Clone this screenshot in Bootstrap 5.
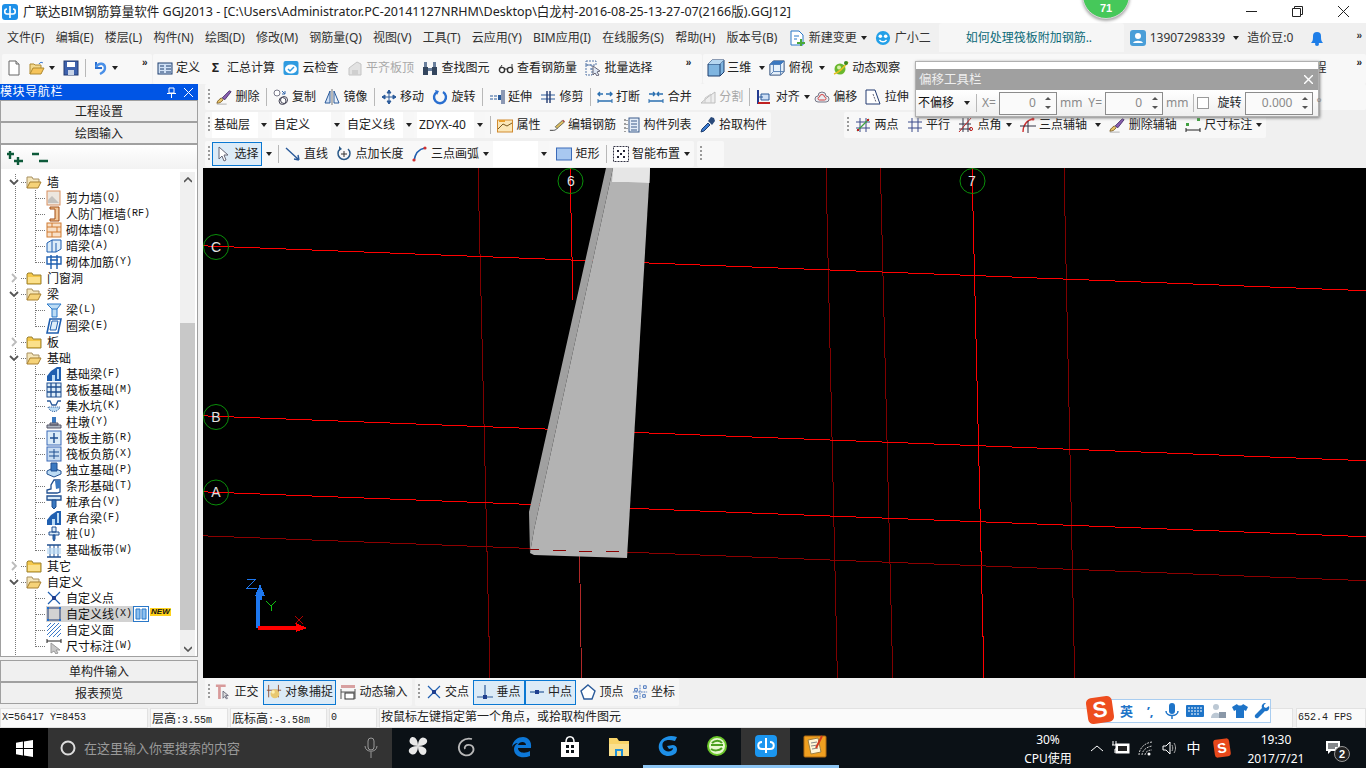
<!DOCTYPE html>
<html lang="zh">
<head>
<meta charset="UTF-8" />
<title>广联达BIM钢筋算量软件 GGJ2013</title>
<link rel="stylesheet" href="https://cdn.jsdelivr.net/npm/bootstrap@5.3.2/dist/css/bootstrap.min.css" />
<style>
  html, body { height: 768px; overflow: hidden; }
  body { width: 1366px; background: #f0f0f0; color: #222; font: 12px/16px "Noto Sans", "Noto Sans CJK SC", sans-serif; position: relative; }
  svg.ic { width: 16px; height: 16px; flex: none; display: block; }
  svg.ic.w18 { width: 18px; height: 18px; }
  /* title + menu */
  .ttl { height: 23px; background: #fff; padding-left: 2px; font-size: 12.53px; white-space: nowrap; }
  .ttl svg.ic { margin-right: 5px; }
  .wbtn { width: 46px; height: 23px; }
  .mnu { height: 31px; padding: 0 0 2px 7px; white-space: nowrap; color: #333; }
  .mnu > span.mi { margin-right: 11.2px; }
  .hot { width: 185px; height: 29px; background: #f6f6f6; color: #0b6a78; padding-left: 27px; border-radius: 3px 3px 0 0; margin-left: 8px; margin-right: 6px; }
  .dbl { font: bold 10px/10px "Liberation Sans", sans-serif; }
  .dbl2 { padding: 4px 11px 0 29px; }
  /* toolbars */
  .rowb { white-space: nowrap; }
  .r1 { height: 30px; padding-left: 2px; }
  .r2 { height: 26px; padding-left: 2px; }
  .r3 { height: 29px; padding-left: 2px; }
  .r4 { height: 29px; padding: 2px 0 0 2px; }
  .seg { height: 100%; background: #f8f8f8; border-radius: 2px; display: flex; align-items: center; }
  .r1 .seg { padding-bottom: 2px; }
  .r2 .seg, .r3 .seg, .r4 .seg { height: 26px; }
  .gap1 { margin-left: 1px; }
  .gap3 { margin-left: 3px; }
  .gap73 { margin-left: 73px; }
  .t { display: flex; align-items: center; padding: 0 4px; height: 100%; }
  .t svg.ic { margin-right: 3.5px; }
  .t svg.ic.w18 { margin-right: 2px; }
  .t.off { color: #a9a9a9; }
  .t.on { background: #dcebf7; border: 1px solid #0a78d2; height: 24px; padding: 0 2px; }
  .t.on.pz { padding: 0 3px; }
  .t.tight { padding-right: 0; }
  .sep { width: 1px; height: 18px; background: #b8b8b8; margin: 0 2px; flex: none; }
  .grip { width: 2px; height: 16px; margin: 0 2px 0 3px; flex: none; background: repeating-linear-gradient(#9a9a9a 0 2px, transparent 2px 4px); }
  .lb .seg:first-child .grip { margin-right: 1px; }
  .car { width: 0; height: 0; border: 3px solid transparent; border-top: 4px solid #222; border-bottom: 0; flex: none; display: inline-block; }
  .cml2 { margin-left: 2px; }
  .cmb { height: 26px; background: #fff; display: flex; align-items: center; padding-left: 2px; margin-right: 3px; flex: none; }
  .cmb b { font-weight: 400; flex-grow: 1; }
  .cmb i { width: 11px; height: 100%; background: #f7f7f7; display: flex; align-items: center; justify-content: center; }
  .c57 { width: 57px; } .c70 { width: 70px; } .c69 { width: 69px; } .c68 { width: 68px; } .c56 { width: 56px; }
  .w4 { width: 4px; flex: none; } .w7 { width: 7px; flex: none; } .w10 { width: 10px; flex: none; }
  .me19 { margin-right: 14px; }
  /* left panel */
  .mainw { height: 624px; }
  .side { width: 203px; padding-right: 5px; flex: none; }
  .phd { height: 16px; background: #0055e5; color: #fff; letter-spacing: .6px; padding-right: 5px; }
  .navb { --bs-btn-padding-y: 0; --bs-btn-font-size: 12px; --bs-btn-line-height: 1; --bs-btn-border-radius: 0; background: #f0f0f0; border: 1px solid #a0a0a0; color: #222; display: block; width: 100%; height: 22px; padding-top: 2px; }
  .treetb { height: 25px; padding: 6px 0 0 6px; background: linear-gradient(#fff, #f2f2f2); border: 1px solid #a0a0a0; border-bottom: 0; }
  .treew { height: 488px; border: 1px solid #a0a0a0; border-top: 0; background: #fff; overflow: hidden; margin-bottom: 3px; }
  .tree { flex-grow: 1; padding-top: 5px; overflow: hidden; font-family: "Noto Sans CJK SC", sans-serif; color: #111; }
  .tr { height: 16px; display: flex; align-items: center; white-space: nowrap; background-repeat: no-repeat; --dv: repeating-linear-gradient(#777 0 1px, transparent 1px 2px); --dh: repeating-linear-gradient(90deg, #777 0 1px, transparent 1px 2px); }
  .tr0 { background-image: var(--dv), var(--dh); background-size: 1px 100%, 5px 1px; background-position: 14px 0, 20px 8px; }
  .tr0.end { background-size: 1px 8px, 5px 1px; }
  .tr1 { padding-left: 45px; background-image: var(--dv), var(--dv), var(--dh); background-size: 1px 100%, 1px 100%, 10px 1px; background-position: 14px 0, 34px 0, 35px 8px; }
  .tr1.lst { background-size: 1px 100%, 1px 9px, 10px 1px; }
  .exp { width: 12px; margin-left: 8px; flex: none; background: #fff; }
  .exp svg, .fold svg { display: block; }
  .fold { margin: 0 5px; flex: none; }
  .tr1 svg.ic { margin-right: 4px; }
  .mn { font: 400 10px/16px "Liberation Mono", monospace; }
  .tsel { display: flex; align-items: center; background: #d2d2d2; padding-right: 1px; height: 16px; }
  .neww { font: italic 700 8px/8px "Liberation Sans", sans-serif; background: #ffd21c; color: #111; padding: 0 1px; margin-top: -5px; margin-left: 1px; }
  .scb { width: 15px; margin: 3px 2px 0 0; background: #f0f0f0; flex: none; }
  .sar { height: 16px; }
  .sp135 { height: 135px; } .sth { height: 307px; background: #c8c8c8; } .sp11 { height: 11px; }
  /* canvas */
  .work { width: 1163px; }
  .cnv { display: block; background: #000; width: 1163px; height: 510px; }
  .cnv text { font: 14px "Liberation Sans", sans-serif; fill: #e0e0e0; text-anchor: middle; }
  .lb { height: 28px; padding-left: 2px; }
  .lb .seg { height: 28px; background: #f6f6f6; }
  .lb .t.on { height: 25px; }
  /* status */
  .stat { height: 20px; gap: 2px; }
  .cell { background: #fafafa; border: 1px solid #e2e2e2; height: 20px; padding-left: 1px; font-size: 12px; white-space: nowrap; }
  .cm { font: 10px/18px "Liberation Mono", monospace; }
  .cm u { text-decoration: none; font: 12px/18px "Noto Sans CJK SC", sans-serif; }
  .s148 { width: 148px; } .s78 { width: 78px; } .s97 { width: 97px; } .s48 { width: 48px; } .s914 { width: 914px; } .s70 { width: 70px; }
  /* taskbar */
  .task { height: 40px; background: #0b1116; color: #fff; }
  .tst { width: 48px; background: #000; height: 40px; }
  .tse { width: 344px; height: 40px; background: #333; color: #9a9a9a; padding-left: 12px; font-size: 13px; }
  .tse svg.ring { margin-right: 8px; }
  .tse .ms-auto { margin-right: 13px; }
  .tk { width: 49px; height: 40px; flex: none; padding-bottom: 2px; }
  svg.big { width: 24px; height: 24px; display: block; flex: none; }
  .tk.und { border-bottom: 3px solid #8cc4f2; }
  .tk.act { background: #333; border-bottom: 3px solid #8cc4f2; }
  .tm4 { margin-left: 1px; } .tm5 { margin-left: 5px; }
  .tray { margin-left: auto; width: 348px; height: 40px; }
  .tc { display: flex; align-items: center; justify-content: center; flex: none; height: 40px; }
  .t60 { width: 60px; flex-direction: column; line-height: 19px; padding-top: 2px; }
  .t8 { width: 8px; } .t22 { width: 22px; } .t24 { width: 24px; } .t26 { width: 26px; } .t23 { width: 23px; } .t25 { width: 25px; font-size: 14px; } .t32 { width: 32px; } .t76 { width: 76px; flex-direction: column; line-height: 19px; padding-top: 2px; } .t52 { width: 52px; position: relative; padding-right: 14px; }
  .nbad { position: absolute; left: 20px; top: 18px; width: 16px; height: 16px; border-radius: 50%; background: #222; border: 1px solid #999; text-align: center; font: bold 11px/14px "Liberation Sans", sans-serif; }
  /* things lying over the rest */
  .gball { position: absolute; left: 1082px; top: -29px; width: 48px; height: 48px; border-radius: 50%; background: #46c85a; border: 1px solid #d8d8d8; box-shadow: 0 2px 3px #aaa; z-index: 5; color: #fff; font: bold 11px/14px "Liberation Sans", sans-serif; text-align: center; padding-top: 29px; }
  .flt { position: absolute; left: 915px; top: 61px; width: 404px; height: 56px; background: #fff; border: 1px solid #b0b0b0; box-shadow: 1px 1px 3px #777; z-index: 4; }
  .fhd { margin-top: 7px; height: 21px; background: #a0a0a0; color: #eee; padding: 0 5px 0 3px; font-size: 12.5px; }
  .fbd { height: 26px; background: linear-gradient(#fff, #efefef); white-space: nowrap; color: #8a8a8a; }
  .fbd .cmb { height: 24px; background: transparent; color: #111; width: 56px; margin-right: 2px; padding-left: 2px; }
  .fbd .cmb i { background: transparent; }
  .spn { width: 58px; height: 23px; border: 1px solid #8c8c8c; background: #fafafa; flex: none; display: flex; align-items: center; justify-content: flex-end; }
  .spr { width: 68px; }
  .spk { width: 15px; margin-left: 5px; height: 100%; display: flex; flex-direction: column; align-items: center; justify-content: space-around; padding: 2px 0; }
  .au { width: 0; height: 0; border: 3px solid transparent; border-bottom: 3px solid #555; border-top: 0; }
  .ad { width: 0; height: 0; border: 3px solid transparent; border-top: 3px solid #555; border-bottom: 0; }
  .fm { margin: 0 3px; }
  .fbd .form-check-input { width: 12px; height: 12px; border-radius: 0; border: 1px solid #9a9a9a; margin: 0 8px 0 1px; flex: none; }
  .sog { position: absolute; left: 1100px; top: 699px; width: 171px; height: 24px; background: #fff; border: 1px solid #a9cdf0; z-index: 6; padding-left: 19px; color: #1e74c8; gap: 6px; font-weight: 700; font-size: 13px; }
  .sgl { position: absolute; left: 1087px; top: 697px; width: 26px; height: 26px; background: #ee4d1e; border-radius: 5px; transform: rotate(-8deg); color: #fff; font: bold 22px/25px "Liberation Sans", sans-serif; text-align: center; z-index: 7; }
  .sgs { width: 16px; height: 18px; background: #e8481a; border-radius: 3px; color: #fff; font: bold 14px/18px "Liberation Sans", sans-serif; text-align: center; transform: rotate(-8deg); }
</style>
</head>
<body>

<svg width="0" height="0" class="d-block">
  <defs>
  <symbol id="logo" viewBox="0 0 16 16"><rect width="16" height="16" rx="3" fill="#1e90e8"/><path d="M8 2v12M5 5c-3 0-3 5 0 5h6c3 0 3-5 0-5" fill="none" stroke="#fff" stroke-width="1.6"/></symbol>
  <symbol id="new" viewBox="0 0 16 16"><path d="M3 1h7l3 3v11H3z" fill="#fff" stroke="#666"/><path d="M10 1v3h3" fill="#ddd" stroke="#666"/></symbol>
  <symbol id="open" viewBox="0 0 16 16"><path d="M1 14V4h4l1 1h6v3" fill="#f3d98e" stroke="#b08a30"/><path d="M1 14l3-6h11l-3 6z" fill="#f6c45a" stroke="#b08a30"/><path d="M10 4c1-2 3-2 4-1" fill="none" stroke="#3a7ad0"/></symbol>
  <symbol id="save" viewBox="0 0 16 16"><rect x="1" y="1" width="14" height="14" fill="#3e62ad" stroke="#223a70"/><rect x="4" y="2" width="8" height="5" fill="#fff"/><rect x="5" y="10" width="6" height="5" fill="#c8d4e8"/></symbol>
  <symbol id="undo" viewBox="0 0 16 16"><path d="M4 2v6h6" fill="none" stroke="#2a6fd0" stroke-width="2"/><path d="M4 7c3-5 9-4 9 1 0 3-3 5-5 6" fill="none" stroke="#4a90e8" stroke-width="2.4"/></symbol>
  <symbol id="def" viewBox="0 0 16 16"><rect x="1" y="3" width="14" height="11" fill="#cfe0f5" stroke="#1f3f6f"/><path d="M3 6h4M3 9h4M3 12h4M9 6h5M9 9h5M9 12h5" stroke="#1f3f6f"/></symbol>
  <symbol id="cloud" viewBox="0 0 16 16"><rect x=".5" y="1" width="15" height="14" rx="2" fill="#2f9be0"/><ellipse cx="8" cy="9" rx="6" ry="4.5" fill="#fff"/><path d="M5 9l2 2 4-4" stroke="#2f9be0" fill="none" stroke-width="1.5"/></symbol>
  <symbol id="flat" viewBox="0 0 16 16"><path d="M2 15V8l8-6 4 2v11z" fill="#e2e2e2" stroke="#c4c4c4"/><path d="M5 15v-5h6v5" fill="#cfcfcf"/></symbol>
  <symbol id="binoc" viewBox="0 0 16 16"><path d="M1 7h5v8H1zM10 7h5v8h-5z" fill="#34465e"/><path d="M6 8h4v3H6zM2 2h3v5H2zM11 2h3v5h-3z" fill="#6a7f9c"/></symbol>
  <symbol id="glass" viewBox="0 0 16 16"><circle cx="4" cy="10" r="2.6" fill="#fff" stroke="#333" stroke-width="1.4"/><circle cx="12" cy="10" r="2.6" fill="#fff" stroke="#333" stroke-width="1.4"/><path d="M6 9h4M2 8l2-3M14 8V4" stroke="#333"/></symbol>
  <symbol id="batch" viewBox="0 0 16 16"><path d="M1 1h10v4H1zM1 5h6v10H1zM5 9h6" fill="none" stroke="#5577a8" stroke-dasharray="2 1"/><path d="M8 6l7 5-3 1 2 3-2 1-2-3-2 2z" fill="#dfe8f5" stroke="#667"/></symbol>
  <symbol id="cube" viewBox="0 0 18 18"><path d="M1 5l4-4h12v12l-4 4H1z" fill="#7fb5e0" stroke="#1f3f6f"/><path d="M1 5h12v12M13 5l4-4" fill="none" stroke="#1f3f6f"/><path d="M1 5l4-4h12l-4 4z" fill="#b5d6f0"/></symbol>
  <symbol id="wire" viewBox="0 0 18 18"><path d="M1 5l4-4h12v12l-4 4H1z" fill="#e8f2fb" stroke="#1f3f6f"/><path d="M1 5h12v12M13 5l4-4M1 17l4-4h12M5 1v12" fill="none" stroke="#4a78b0"/><path d="M1 5l4-4h12l-4 4z" fill="#3a78c0"/></symbol>
  <symbol id="orbit" viewBox="0 0 16 16"><circle cx="7" cy="9" r="5.5" fill="#6ab82e"/><circle cx="6" cy="7.5" r="2" fill="#d6f0a8"/><path d="M1 14C7 12 12 6 15 2" stroke="#e8c020" stroke-width="1.6" fill="none"/><circle cx="13" cy="3" r="2" fill="#3a8a20"/></symbol>
  <symbol id="brush" viewBox="0 0 18 18"><path d="M1 16c3 0 5-1 7-4l-2-2c-2 2-4 2-5 6z" fill="#e8c46a" stroke="#7a5a20"/><path d="M7 10l8-8 2 1-7 9z" fill="#8a5fb0" stroke="#45306a"/><path d="M1 17h11" stroke="#aaa"/></symbol>
  <symbol id="copy" viewBox="0 0 16 16"><circle cx="4" cy="4" r="3" fill="#fff" stroke="#778"/><circle cx="11" cy="11" r="3.5" fill="#fff" stroke="#445"/><circle cx="9.5" cy="12" r="3.5" fill="none" stroke="#445"/><path d="M9 2l3 3M12 2v3H9" fill="none" stroke="#3366aa"/></symbol>
  <symbol id="mirror" viewBox="0 0 16 16"><path d="M1 14L6 2v12z" fill="#cfe0f5" stroke="#2a5a9a"/><path d="M15 14L10 2v12z" fill="#eef4fb" stroke="#2a5a9a"/><path d="M8 0v16" stroke="#777"/></symbol>
  <symbol id="move" viewBox="0 0 16 16"><path d="M8 1v14M1 8h14M8 1L6 4h4zM8 15l-2-3h4zM1 8l3-2v4zM15 8l-3-2v4z" fill="#2a5a9a" stroke="#2a5a9a"/></symbol>
  <symbol id="rot" viewBox="0 0 16 16"><path d="M11 3a6 6 0 1 1-6 0" fill="none" stroke="#2a6fd0" stroke-width="2.4"/><path d="M3 1l4 1-2 4z" fill="#2a6fd0"/></symbol>
  <symbol id="ext" viewBox="0 0 16 16"><path d="M13 1v14M15 1v14" stroke="#223a70"/><path d="M1 7h8M1 10h8" stroke="#2a5a9a" stroke-dasharray="3 1"/><path d="M9 6h3v5H9z" fill="#2a5a9a"/></symbol>
  <symbol id="trim" viewBox="0 0 16 16"><path d="M1 6h14M1 10h14" stroke="#2a5a9a"/><path d="M7 2v12M10 2v12" stroke="#223a70" stroke-width="1.4"/></symbol>
  <symbol id="brk" viewBox="0 0 16 16"><path d="M1 5h5M9 5h6M1 12h14M3 3L1 5l2 2M13 3l2 2-2 2" fill="none" stroke="#2a6fb0" stroke-width="1.4"/><path d="M1 10v4M15 10v4" stroke="#2a6fb0"/></symbol>
  <symbol id="mrg" viewBox="0 0 16 16"><path d="M1 5h5M9 5h6M1 12h14M5 3l2 2-2 2M11 3L9 5l2 2" fill="none" stroke="#2a6fb0" stroke-width="1.4"/><path d="M1 10v4M15 10v4" stroke="#2a6fb0"/></symbol>
  <symbol id="spl" viewBox="0 0 16 16"><path d="M1 14L8 8l7-5v11z" fill="#eee" stroke="#bdbdbd"/><path d="M5 14V9l6-4v9" fill="none" stroke="#c8c8c8"/></symbol>
  <symbol id="alig" viewBox="0 0 16 16"><path d="M2 1v14" stroke="#223a90" stroke-width="2"/><path d="M2 14h12" stroke="#c02020" stroke-width="2"/><path d="M5 5h8v6H5z" fill="#cfe0f5" stroke="#2a5a9a"/><path d="M3 8h4" stroke="#2a5a9a"/></symbol>
  <symbol id="ofs" viewBox="0 0 16 16"><path d="M4 13a3 3 0 0 1 0-6 4 4 0 0 1 8 0 3 3 0 0 1 0 6z" fill="#e9edf2" stroke="#778"/><path d="M5.500 11a1.500 1.500 0 0 1 0-3 2.500 2.500 0 0 1 5 0 1.500 1.500 0 0 1 0 3z" fill="none" stroke="#d24040"/></symbol>
  <symbol id="strch" viewBox="0 0 16 16"><path d="M1 15V1h9l5 14z" fill="#fff" stroke="#223a70"/><path d="M8 5l3 8" stroke="#667" stroke-dasharray="2 1"/></symbol>
  <symbol id="prop" viewBox="0 0 16 16"><rect x=".5" y="3" width="15" height="12" fill="#fbe7b8" stroke="#d08a30"/><path d="M1 12l5-5 4 2 5-3" stroke="#7a5a20" fill="none"/><path d="M2 3h6v2H2z" fill="#e8a030"/></symbol>
  <symbol id="pen" viewBox="0 0 18 16"><path d="M1 14h4c2 0 3-1 5-3" fill="none" stroke="#333"/><path d="M7 10l8-7 2 2-8 7z" fill="#e0c060" stroke="#665"/><path d="M15 3l2 2 1-1-2-2z" fill="#b04040"/></symbol>
  <symbol id="lst" viewBox="0 0 16 16"><rect x="5" y="1" width="10" height="14" fill="#e4edf8" stroke="#3a5a8a"/><path d="M7 4h6M7 7h6M7 10h6M7 13h6" stroke="#3a5a8a"/><path d="M1 2v2M1 6v2M1 10v2M1 14v1M3 3v1M3 7v1M3 11v1" stroke="#444"/></symbol>
  <symbol id="pick" viewBox="0 0 16 16"><path d="M1 15l1-3 6-6 2 2-6 6z" fill="#3a7ad0" stroke="#1f3f6f"/><path d="M8 4l4 4 3-4-1-3-3-1z" fill="#2a4a7a"/></symbol>
  <symbol id="two" viewBox="0 0 16 16"><path d="M1 5h14M1 11h14M5 1v14M11 1v14" stroke="#3a4a8a"/><path d="M2 14L14 2" stroke="#40a040" stroke-width="1.2"/><path d="M2 12h2v2H2zM12 2h2v2h-2z" fill="#c02020"/></symbol>
  <symbol id="par" viewBox="0 0 16 16"><path d="M1 5h14M1 11h14M5 1v14M11 1v14" stroke="#3a4a8a"/></symbol>
  <symbol id="ang" viewBox="0 0 16 16"><path d="M1 7h12M1 12h12M5 1v14M10 1v14" stroke="#334"/><path d="M1 15L13 1" stroke="#c02020"/><circle cx="13" cy="12" r="1.6" fill="none" stroke="#c02020"/></symbol>
  <symbol id="arc" viewBox="0 0 16 16"><path d="M3 15C3 8 7 3 13 2" fill="none" stroke="#d03030" stroke-width="1.4"/><path d="M0 9h16M8 4v12" stroke="#334"/><circle cx="13" cy="2" r="1.500" fill="#d03030"/></symbol>
  <symbol id="dim" viewBox="0 0 16 16"><path d="M1 11v4M15 11v4M1 13h14" stroke="#222"/><path d="M1 6h3v3H1zM12 1h3v3h-3z" fill="#40a040"/></symbol>
  <symbol id="cur" viewBox="0 0 16 16"><path d="M4 1v12l3-3 2 5 2-1-2-5h4z" fill="#fff" stroke="#667"/></symbol>
  <symbol id="lin" viewBox="0 0 16 16"><path d="M1 2l13 12M14 14l-5-1M14 14l-1-5" fill="none" stroke="#2a5a9a" stroke-width="1.4"/></symbol>
  <symbol id="plen" viewBox="0 0 16 16"><path d="M12 3a6 6 0 1 1-8 0" fill="none" stroke="#2a5a8a" stroke-width="1.500"/><path d="M3 0l3 3-3 2z" fill="#2a5a8a"/><path d="M8 5v6M5 8h6" stroke="#333"/></symbol>
  <symbol id="arc2" viewBox="0 0 16 16"><path d="M2 15C3 8 7 3 13 2" fill="none" stroke="#1f5fb0" stroke-width="1.6"/><circle cx="13" cy="2" r="1.600" fill="#d03030"/><circle cx="2" cy="14" r="1.600" fill="#d03030"/></symbol>
  <symbol id="rct" viewBox="0 0 16 16"><rect x=".5" y="2" width="15" height="12" fill="#a8c8f0" stroke="#3a6ab8"/></symbol>
  <symbol id="smt" viewBox="0 0 16 16"><rect x=".5" y=".5" width="15" height="15" fill="#fff" stroke="#334" stroke-dasharray="2 1"/><path d="M4 4h2v2H4zM10 4h2v2h-2zM7 7h2v2H7zM4 10h2v2H4zM10 10h2v2h-2z" fill="#223"/></symbol>
  <symbol id="orth" viewBox="0 0 18 18"><path d="M1 2h11M5 2v15" stroke="#d89a9a" stroke-width="3"/><path d="M9 8v8l2-2 2 3 1-1-2-3h3z" fill="#ddd" stroke="#667"/></symbol>
  <symbol id="snap" viewBox="0 0 18 18"><path d="M3 1v14M14 1v14M1 7h16" stroke="#8a4a30"/><circle cx="10" cy="11" r="5" fill="#e8c870"/><circle cx="8" cy="9" r="2" fill="#fff0b0"/></symbol>
  <symbol id="dyn" viewBox="0 0 16 16"><path d="M1 1h14v3H1z" fill="#d8a0a0"/><path d="M1 5v10M15 5v10M1 8h14" stroke="#555"/><rect x="5" y="9" width="9" height="6" fill="#fff" stroke="#333"/></symbol>
  <symbol id="x" viewBox="0 0 16 16"><path d="M2 2l12 12M14 2L2 14" stroke="#1f5fb0" stroke-width="1.2"/><rect x="6" y="6" width="4" height="4" fill="#1f3f8f"/></symbol>
  <symbol id="perp" viewBox="0 0 16 16"><path d="M8 1v12M0 13h16" stroke="#2a5a9a" stroke-width="1.2"/><rect x="6" y="11" width="4" height="4" fill="#1f3f8f"/></symbol>
  <symbol id="midp" viewBox="0 0 16 16"><path d="M1 8h14" stroke="#2a5a9a" stroke-width="1.2"/><rect x="6" y="6" width="4" height="4" fill="#1f3f8f"/></symbol>
  <symbol id="vert" viewBox="0 0 16 16"><path d="M8 1l7 6-3 8H4L1 7z" fill="#fff" stroke="#2a5a9a" stroke-width="1.4"/></symbol>
  <symbol id="crd" viewBox="0 0 18 18"><path d="M9 1v16M1 9h16" stroke="#3a6ab8" stroke-dasharray="2 1"/><path d="M3 5h3v3H3zM13 2h3v3h-3zM3 13h3v3H3zM12 12h3v3h-3z" fill="none" stroke="#3a6ab8"/></symbol>
  <symbol id="chg" viewBox="0 0 16 16"><path d="M2 1h8l4 4v10H2z" fill="#fff" stroke="#2a78c8"/><path d="M5 6h5M5 9h3" stroke="#2a78c8"/><path d="M8 12h3V9h2v3h3v2h-3v2h-2v-2H8z" fill="#4aa83a"/></symbol>
  <symbol id="xiao" viewBox="0 0 18 18"><circle cx="9" cy="9" r="8" fill="#23a0e8"/><circle cx="6" cy="7" r="2" fill="#fff"/><circle cx="12" cy="7" r="2" fill="#fff"/><path d="M5 11c2 3 6 3 8 0" stroke="#fff" fill="none" stroke-width="1.500"/></symbol>
  <symbol id="user" viewBox="0 0 16 16"><rect width="16" height="16" rx="3" fill="#4a9ed8"/><circle cx="8" cy="6" r="3" fill="#fff"/><path d="M3 13c1-3 9-3 10 0z" fill="#fff"/></symbol>
  <symbol id="bell" viewBox="0 0 16 16"><path d="M2 13c2-2 2-4 2-7a4 4 0 0 1 8 0c0 3 0 5 2 7z" fill="#1e7ee8"/><circle cx="8" cy="14" r="2" fill="#1e7ee8"/></symbol>
  <symbol id="fo" viewBox="0 0 16 14"><path d="M1 13V2h5l1 2h6v3" fill="#f5e6ba" stroke="#a89060"/><path d="M1 13l3-6h11l-3 6z" fill="#f5d278" stroke="#a88030"/></symbol>
  <symbol id="fc" viewBox="0 0 16 14"><path d="M1 13V3l1-1h4l1 2h8v9z" fill="#f5c84a" stroke="#9a8030"/><path d="M2 6h12v6H2z" fill="#fbe08a"/></symbol>
  <symbol id="t-wall" viewBox="0 0 16 16"><rect x="1" y="1" width="13" height="14" fill="#ece6df" stroke="#d89060"/><path d="M2 10l4-4 7 7H2z" fill="#a8a8a8" opacity=".6"/></symbol>
  <symbol id="t-door" viewBox="0 0 16 16"><path d="M4 1h9v14H4v-2h5V3H4z" fill="#f3c89a" stroke="#a04a10"/></symbol>
  <symbol id="t-brick" viewBox="0 0 16 16"><rect x="1" y="1" width="14" height="14" fill="#f8e0c8" stroke="#d07a30"/><path d="M1 5h14M1 10h14M6 1v4M11 5v5M6 10v5" stroke="#d07a30"/></symbol>
  <symbol id="t-hb" viewBox="0 0 16 16"><path d="M1 5l5-3h9v9l-5 3H1z" fill="#dcecf8" stroke="#1f5fb0"/><path d="M6 2v12M10 5v9" stroke="#1f5fb0"/></symbol>
  <symbol id="t-reb" viewBox="0 0 16 16"><path d="M1 3h14v7H1z" fill="none" stroke="#1f5fb0" stroke-width="1.4"/><path d="M5 1v14M11 1v14M4 6h8" stroke="#1f5fb0" stroke-width="1.400"/></symbol>
  <symbol id="t-beam" viewBox="0 0 16 16"><path d="M1 2h14l-4 5v8H6V7z" fill="#bcdcf5" stroke="#2a78c8"/><path d="M6 7h5" stroke="#2a78c8"/></symbol>
  <symbol id="t-ring" viewBox="0 0 16 16"><path d="M4 1h11l-3 14H1z" fill="#fff" stroke="#1f5fb0" stroke-width="1.600"/><path d="M6 3h6l-2 9H4z" fill="#dcecf8" stroke="#1f5fb0"/></symbol>
  <symbol id="t-fb" viewBox="0 0 16 16"><path d="M1 15v-5l4-5 6-4h4v14z" fill="#1f5fb0"/><path d="M6 9h3v6H6zM11 3h2v10h-2z" fill="#bcdcf5"/></symbol>
  <symbol id="t-raft" viewBox="0 0 16 16"><rect x="1" y="1" width="14" height="14" fill="#dcecf8" stroke="#1f4f90"/><path d="M1 5h14M1 10h14M5 1v14M10 1v14" stroke="#1f4f90" stroke-width="1.300"/></symbol>
  <symbol id="t-pit" viewBox="0 0 16 16"><path d="M1 3h3l2 4h4l2-4h3" fill="none" stroke="#2a5a9a" stroke-width="1.300"/><path d="M2 9c2 6 10 6 12 0z" fill="#bcdcf5" stroke="#2a5a9a" stroke-dasharray="1 1"/></symbol>
  <symbol id="t-ped" viewBox="0 0 16 16"><path d="M6 3h4v6H6z" fill="#3a78c0"/><path d="M4 9h8v2H4zM1 11h14v3H1z" fill="#b0b8c4" stroke="#556"/></symbol>
  <symbol id="t-main" viewBox="0 0 16 16"><rect x="1" y="1" width="14" height="14" fill="#dcecf8" stroke="#3a6ab8"/><path d="M8 3v10M4 8h8" stroke="#1f4f90" stroke-width="1.400"/></symbol>
  <symbol id="t-neg" viewBox="0 0 16 16"><rect x="1" y="1" width="14" height="14" fill="#c8dcf2" stroke="#3a6ab8"/><path d="M3 6h10M3 10h10M8 3v10" stroke="#1f4f90"/></symbol>
  <symbol id="t-ind" viewBox="0 0 16 16"><path d="M1 9l6-3 8 3v3l-7 3-7-3z" fill="#bcdcf5" stroke="#1f4f90"/><path d="M5 1h6v8H5z" fill="#3a78c0" stroke="#1f4f90"/></symbol>
  <symbol id="t-str" viewBox="0 0 16 16"><path d="M1 15v-3l4-1V7l3-5h6v12l-3 1z" fill="#fff" stroke="#1f4f90" stroke-width="1.300"/><path d="M9 3l5-1v8l-4 1z" fill="#3a78c0"/></symbol>
  <symbol id="t-cap" viewBox="0 0 16 16"><path d="M1 2h14v4H1z" fill="#dcecf8" stroke="#1f4f90" stroke-width="1.300"/><path d="M6 6h4v7l-2 2-2-2z" fill="#3a78c0" stroke="#1f4f90"/></symbol>
  <symbol id="t-pil" viewBox="0 0 16 16"><path d="M6 1h4v5H6zM3 6h10v3H3z" fill="#dcecf8" stroke="#1f4f90"/><path d="M7 9h2v4l-1 2-1-2z" fill="#3a78c0" stroke="#1f4f90"/></symbol>
  <symbol id="t-bnd" viewBox="0 0 16 16"><path d="M1 3h14M1 15h14" stroke="#1f4f90" stroke-width="1.500"/><path d="M4 3v12M8 3v12M12 3v12" stroke="#1f4f90"/><path d="M1 6h14v6H1z" fill="#bcdcf5" opacity=".7"/></symbol>
  <symbol id="t-lin" viewBox="0 0 16 16"><rect x="2" y="2" width="12" height="12" fill="none" stroke="#223a70"/><path d="M1 1h2v2H1zM13 1h2v2h-2zM1 13h2v2H1zM13 13h2v2h-2z" fill="#1f6fd0"/></symbol>
  <symbol id="t-fac" viewBox="0 0 16 16"><rect x="1" y="1" width="14" height="14" fill="#fff"/><path d="M1 5l4-4M1 9l8-8M1 13L13 1M3 15L15 3M7 15l8-8M11 15l4-4" stroke="#3a78c8"/></symbol>
  <symbol id="t-dim" viewBox="0 0 16 16"><path d="M1 1v4M15 1v4M1 3h14" stroke="#222"/><path d="M5 5v10l3-2 2 3 2-1-2-3h4z" fill="#c8c8c8" stroke="#999"/></symbol>
  <symbol id="grid" viewBox="0 0 16 16"><rect x=".5" y=".5" width="15" height="15" fill="#fff" stroke="#2a78c8"/><path d="M3 3h4v10H3zM9 3h4v10H9z" fill="#8cc0f0" stroke="#2a78c8"/></symbol>
  <symbol id="win" viewBox="0 0 16 16"><path d="M0 2.500l6.500-1v6H0zM7.500 1.300L16 0v7.500H7.500zM0 8.500h6.500v6l-6.500-1zM7.500 8.500H16V16l-8.500-1.300z" fill="#fff"/></symbol>
  <symbol id="mic" viewBox="0 0 16 24"><rect x="5" y="2" width="6" height="12" rx="3" fill="none" stroke="#999"/><path d="M2 10c0 7 12 7 12 0M8 16v6" fill="none" stroke="#999"/></symbol>
  <symbol id="pin" viewBox="0 0 24 24"><path d="M12 11C6 11 2 8 4 4s8-2 8 7c0-6 3-10 7-8s3 8-7 8c6 0 10 3 8 7s-8 2-8-7c0 6-3 10-7 8s-3-8 7-8z" fill="#e8e8e8"/></symbol>
  <symbol id="spi" viewBox="0 0 24 24"><path d="M17 4C9 2 3 8 4 14s8 8 12 5 3-8-1-9-6 2-5 4" fill="none" stroke="#b8b8b8" stroke-width="1.800"/></symbol>
  <symbol id="edg" viewBox="0 0 24 24"><path d="M3 12C4 5 9 2 14 2c5 0 9 4 8 11H9c0 5 7 6 12 3v5c-7 3-16 1-16-7 0-3 2-5 4-6-3 0-5 2-6 4z" fill="#0d78d8"/><path d="M9 10h8c0-4-7-4-8 0z" fill="#0b1116"/></symbol>
  <symbol id="sto" viewBox="0 0 24 24"><path d="M3 7h18v15H3z" fill="#fff"/><path d="M8 7c0-7 8-7 8 0" fill="none" stroke="#fff" stroke-width="1.500"/><path d="M8 10h3v3H8zM13 10h3v3h-3zM8 15h3v3H8zM13 15h3v3h-3z" fill="#0b1116"/></symbol>
  <symbol id="fld" viewBox="0 0 24 24"><path d="M2 3h8l2 3h10v15H2z" fill="#f8d469"/><path d="M2 9h20v12H2z" fill="#fae08e"/><path d="M8 14h8v7H8z" fill="#1e90d8"/><path d="M10 16h4v5h-4z" fill="#fae08e"/></symbol>
  <symbol id="gg" viewBox="0 0 24 24"><path d="M21 3C10-1 1 7 3 15s12 9 17 4c2-3 1-8-3-8l-6 1 2 3 4-1c0 4-8 5-10 0S8 4 19 7z" fill="#1e90e8"/></symbol>
  <symbol id="gre" viewBox="0 0 24 24"><circle cx="12" cy="12" r="10" fill="#6ac62a"/><circle cx="12" cy="12" r="8" fill="#e8f8d0"/><path d="M6 11h12M6 15c3 2 8 2 11-1M7 9c3-3 8-3 10 0" fill="none" stroke="#4aa020" stroke-width="2"/></symbol>
  <symbol id="gld" viewBox="0 0 24 24"><rect x="1" y="1" width="22" height="22" rx="4" fill="#1b96f0"/><path d="M12 4v15M8 8c-5 0-5 7 0 7h8c5 0 5-7 0-7" fill="none" stroke="#fff" stroke-width="2"/></symbol>
  <symbol id="not" viewBox="0 0 24 24"><rect x="1" y="2" width="22" height="21" rx="1" fill="#f0a020" stroke="#b06a10"/><path d="M5 6l10-2 3 14-10 2z" fill="#fff6d8" stroke="#a08040"/><path d="M8 9l6-1M8 12l7-1M9 15l6-1" stroke="#888"/><path d="M19 2l-6 12" stroke="#d03a20" stroke-width="2"/></symbol>
  <symbol id="bat" viewBox="0 0 20 16"><rect x="6" y="4" width="13" height="9" fill="#fff" stroke="#fff"/><rect x="8" y="6" width="9" height="5" fill="#222"/><path d="M3 1v4M6 1v4M2 5h5v4H5v4" fill="none" stroke="#fff"/></symbol>
  <symbol id="wif" viewBox="0 0 16 16"><path d="M2 15C2 9 7 3 15 2M5 15c0-4 4-8 10-9M8 15c0-2 2-5 7-5" fill="none" stroke="#ccc" stroke-dasharray="2 1"/><circle cx="12" cy="14" r="1.500" fill="#fff"/></symbol>
  <symbol id="vol" viewBox="0 0 16 16"><path d="M1 6h3l4-4v12l-4-4H1z" fill="none" stroke="#fff"/><path d="M10 5c1 2 1 4 0 6M12 3c2 3 2 7 0 10" fill="none" stroke="#aaa"/></symbol>
  <symbol id="ntf" viewBox="0 0 16 16"><path d="M1 1h14v10H6l-3 3v-3H1z" fill="#fff"/><path d="M3 4h10M3 6h10M3 8h7" stroke="#0b1116"/></symbol>
  <symbol id="mc2" viewBox="0 0 16 16"><rect x="5" y="0" width="6" height="11" rx="3" fill="#1e74c8"/><path d="M2 8c0 6 12 6 12 0M8 13v3" fill="none" stroke="#1e74c8" stroke-width="1.500"/></symbol>
  <symbol id="kb" viewBox="0 0 18 16"><rect x="0" y="2" width="18" height="12" rx="1" fill="#1e74c8"/><path d="M2 5h14M2 8h14M5 11h8" stroke="#fff" stroke-dasharray="2 1"/></symbol>
  <symbol id="psn" viewBox="0 0 16 16"><circle cx="6" cy="4" r="3" fill="#bcc8d4"/><path d="M1 15c0-7 10-7 10 0z" fill="#bcc8d4"/><rect x="9" y="9" width="7" height="6" fill="#8a98a8"/></symbol>
  <symbol id="shr" viewBox="0 0 16 16"><path d="M5 1L0 4l2 4 2-1v8h8V7l2 1 2-4-5-3c-1 2-5 2-6 0z" fill="#1e74c8"/></symbol>
  <symbol id="wre" viewBox="0 0 16 16"><path d="M15 3l-3 2-2-1 0-2 2-2c-3 0-5 2-4 5L1 12c-1 2 1 4 3 3l7-7c3 1 5-2 4-5z" fill="#1e74c8"/></symbol>
  </defs>
</svg>

<!-- titulo -->
<div class="ttl d-flex align-items-center">
  <svg class="ic"><use href="#logo"/></svg>
  <span class="flex-grow-1">广联达BIM钢筋算量软件 GGJ2013 - [C:\Users\Administrator.PC-20141127NRHM\Desktop\白龙村-2016-08-25-13-27-07(2166版).GGJ12]</span>
  <div class="wbtn d-flex align-items-center justify-content-center"><svg width="11" height="11"><path d="M0 5.500h11" stroke="#222"/></svg></div>
  <div class="wbtn d-flex align-items-center justify-content-center"><svg width="11" height="11"><path d="M.5 2.500h8v8h-8zM2.500 2.500v-2h8v8h-2" fill="none" stroke="#222"/></svg></div>
  <div class="wbtn d-flex align-items-center justify-content-center"><svg width="11" height="11"><path d="M0 0l11 11M11 0L0 11" stroke="#222"/></svg></div>
</div>
<div class="gball">71</div>

<!-- menu -->
<div class="mnu d-flex align-items-center">
  <span class="mi">文件(F)</span><span class="mi">编辑(E)</span><span class="mi">楼层(L)</span><span class="mi">构件(N)</span><span class="mi">绘图(D)</span><span class="mi">修改(M)</span><span class="mi">钢筋量(Q)</span><span class="mi">视图(V)</span><span class="mi">工具(T)</span><span class="mi">云应用(Y)</span><span class="mi">BIM应用(I)</span><span class="mi">在线服务(S)</span><span class="mi">帮助(H)</span><span class="mi">版本号(B)</span>
  <svg class="ic me-1"><use href="#chg"/></svg><span class="me-1">新建变更</span><i class="car me-2"></i>
  <svg class="ic me-1"><use href="#xiao"/></svg><span>广小二</span>
  <div class="hot d-flex align-items-center">如何处理筏板附加钢筋..</div>
  <svg class="ic me-1"><use href="#user"/></svg><span class="me-2">13907298339</span><i class="car me-2"></i><span class="me-3">造价豆:0</span>
  <svg class="ic"><use href="#bell"/></svg>
  <span class="dbl ms-auto me-1 align-self-start pt-2">»</span>
</div>

<!-- fila 1 -->
<div class="rowb r1 d-flex">
  <div class="seg">
    <span class="w4"></span><svg class="ic"><use href="#new"/></svg><span class="w7"></span>
    <svg class="ic"><use href="#open"/></svg><i class="car mx-1"></i><span class="w4"></span>
    <svg class="ic"><use href="#save"/></svg><span class="w4"></span><i class="sep"></i><span class="w4"></span>
    <svg class="ic"><use href="#undo"/></svg><i class="car ms-1"></i>
    <span class="dbl align-self-start pt-1 ps-4 pe-1">»</span>
  </div>
  <div class="seg gap1">
    <div class="t"><svg class="ic"><use href="#def"/></svg>定义</div>
    <div class="t"><b class="ps-1 pe-2">Σ</b>汇总计算</div>
    <div class="t"><svg class="ic"><use href="#cloud"/></svg>云检查</div>
    <div class="t off"><svg class="ic"><use href="#flat"/></svg>平齐板顶</div>
    <div class="t"><svg class="ic"><use href="#binoc"/></svg>查找图元</div>
    <div class="t"><svg class="ic"><use href="#glass"/></svg>查看钢筋量</div>
    <div class="t"><svg class="ic"><use href="#batch"/></svg>批量选择</div>
    <span class="dbl align-self-start dbl2">»</span>
  </div>
  <div class="seg gap1 flex-grow-1">
    <div class="t"><svg class="ic w18"><use href="#cube"/></svg>三维</div><i class="car ms-1"></i>
    <div class="t"><svg class="ic"><use href="#wire"/></svg>俯视</div><i class="car cml2 me-1"></i>
    <div class="t"><svg class="ic"><use href="#orbit"/></svg>动态观察</div>
    <span class="ms-auto me19">工程</span>
    <span class="dbl align-self-start pt-1 ps-3 pe-1">»</span>
  </div>
</div>

<div class="mainw d-flex">
  <!-- panel izquierdo -->
  <div class="side">
    <div class="phd d-flex align-items-center justify-content-between">
      <span>模块导航栏</span>
      <span class="d-flex gap-2 align-items-center">
        <svg width="9" height="11"><path d="M2 1h5v5H2zM0 6.500h9M4.500 6v5" fill="none" stroke="#fff"/></svg>
        <svg width="9" height="9"><path d="M0 0l9 9M9 0L0 9" stroke="#fff"/></svg>
      </span>
    </div>
    <button class="btn navb">工程设置</button>
    <button class="btn navb">绘图输入</button>
    <div class="treetb d-flex gap-2 align-items-start">
      <svg width="17" height="15"><path d="M3 0v8M0 3h7M11 6v8M7 10h9" stroke="#0d5a3a" stroke-width="2.400"/></svg>
      <svg width="17" height="15"><path d="M0 3h7M7 10h9" stroke="#0d5a3a" stroke-width="2.400"/></svg>
    </div>
    <div class="treew d-flex">
      <div class="tree" id="tree"></div>
      <div class="scb">
        <div class="sar d-flex align-items-center justify-content-center"><svg width="8" height="6"><path d="M0 5l4-4 4 4" fill="none" stroke="#555" stroke-width="1.600"/></svg></div>
        <div class="sp135"></div><div class="sth"></div><div class="sp11"></div>
        <div class="sar d-flex align-items-center justify-content-center"><svg width="8" height="6"><path d="M0 1l4 4 4-4" fill="none" stroke="#555" stroke-width="1.600"/></svg></div>
      </div>
    </div>
    <button class="btn navb">单构件输入</button>
    <button class="btn navb">报表预览</button>
  </div>

  <!-- area de trabajo -->
  <div class="work">
    <div class="rowb r2 d-flex">
      <div class="seg flex-grow-1">
        <i class="grip"></i>
        <div class="t"><svg class="ic"><use href="#brush"/></svg>删除</div><i class="sep"></i>
        <div class="t"><svg class="ic"><use href="#copy"/></svg>复制</div>
        <div class="t"><svg class="ic"><use href="#mirror"/></svg>镜像</div><i class="sep"></i>
        <div class="t"><svg class="ic"><use href="#move"/></svg>移动</div>
        <div class="t"><svg class="ic"><use href="#rot"/></svg>旋转</div><i class="sep"></i>
        <div class="t"><svg class="ic"><use href="#ext"/></svg>延伸</div>
        <div class="t"><svg class="ic"><use href="#trim"/></svg>修剪</div><i class="sep"></i>
        <div class="t"><svg class="ic"><use href="#brk"/></svg>打断</div>
        <div class="t"><svg class="ic"><use href="#mrg"/></svg>合并</div>
        <div class="t off"><svg class="ic"><use href="#spl"/></svg>分割</div><i class="sep"></i>
        <div class="t tight"><svg class="ic"><use href="#alig"/></svg>对齐<i class="car ms-1"></i></div>
        <div class="t"><svg class="ic"><use href="#ofs"/></svg>偏移</div>
        <div class="t"><svg class="ic"><use href="#strch"/></svg>拉伸</div>
      </div>
    </div>
    <div class="rowb r3 d-flex align-items-center">
      <div class="seg">
        <i class="grip"></i>
        <div class="cmb c57"><b>基础层</b><i><u class="car"></u></i></div>
        <div class="cmb c70"><b>自定义</b><i><u class="car"></u></i></div>
        <div class="cmb c69"><b>自定义线</b><i><u class="car"></u></i></div>
        <div class="cmb c68"><b>ZDYX-40</b><i><u class="car"></u></i></div>
        <i class="sep"></i>
        <div class="t"><svg class="ic"><use href="#prop"/></svg>属性</div>
        <div class="t"><svg class="ic"><use href="#pen"/></svg>编辑钢筋</div>
        <div class="t"><svg class="ic"><use href="#lst"/></svg>构件列表</div>
        <div class="t"><svg class="ic"><use href="#pick"/></svg>拾取构件</div>
      </div>
      <div class="seg gap73">
        <i class="grip"></i>
        <div class="t"><svg class="ic"><use href="#two"/></svg>两点</div>
        <div class="t"><svg class="ic"><use href="#par"/></svg>平行</div>
        <div class="t"><svg class="ic"><use href="#ang"/></svg>点角<i class="car ms-1"></i></div>
        <div class="t"><svg class="ic"><use href="#arc"/></svg>三点辅轴<i class="car ms-2"></i></div>
        <div class="t"><svg class="ic"><use href="#brush"/></svg>删除辅轴</div>
        <div class="t"><svg class="ic"><use href="#dim"/></svg>尺寸标注<i class="car ms-1"></i></div>
      </div>
    </div>
    <div class="rowb r4 d-flex align-items-start">
      <div class="seg">
        <i class="grip"></i>
        <div class="t on"><svg class="ic"><use href="#cur"/></svg>选择</div><i class="car mx-1"></i>
        <i class="sep"></i>
        <div class="t"><svg class="ic"><use href="#lin"/></svg>直线</div>
        <div class="t"><svg class="ic"><use href="#plen"/></svg>点加长度</div>
        <div class="t"><svg class="ic"><use href="#arc2"/></svg>三点画弧<i class="car ms-1"></i></div>
        <div class="cmb c56"><b></b><i><u class="car"></u></i></div>
        <div class="t"><svg class="ic"><use href="#rct"/></svg>矩形</div><i class="sep"></i>
        <div class="t"><svg class="ic"><use href="#smt"/></svg>智能布置<i class="car ms-1"></i></div>
      </div>
      <div class="seg gap3"><i class="grip"></i><span class="w10"></span><span class="w10"></span></div>
    </div>

    <!-- lienzo CAD -->
    <svg class="cnv" viewBox="203 168 1163 510" shape-rendering="crispEdges">
      <g fill="none" stroke="#800000">
        <path d="M478 168L490 678"/><path d="M826 168L837.400 678"/><path d="M880.400 168L892.800 678"/><path d="M1064 168L1074.700 678"/>
      </g>
      <path d="M570 168L573 300" stroke="#f00" fill="none"/>
      <path d="M579.500 551L581.500 678" stroke="#b02828" fill="none"/>
      <path d="M972 168L984 678" stroke="#f00" fill="none"/>
      <g fill="none" stroke="#f00">
        <path d="M203 245.800L1366 290.700"/><path d="M203 415.800L1366 460.700"/><path d="M203 491.800L1366 536.700"/>
      </g>
      <path d="M203 535.800L1366 580.700" fill="none" stroke="#8c0000"/>
      <g shape-rendering="geometricPrecision">
        <polygon points="606,168 613,168 534,530 530,553 529,512" fill="#a0a0a0"/>
        <polygon points="613,168 650,168 627,558 534,555 530,553 534,530" fill="#b3b3b3"/>
        <polygon points="613,168 650,168 649.500,183 628,182 612,182" fill="#e6e6e6"/>
      </g>
      <path d="M553 550.500h13M606 551.500h13M579 551.500h13M530 549.500h9" stroke="#8c0000" fill="none" stroke-width="1.500"/>
      <g fill="none" stroke="#0a8f0a" shape-rendering="geometricPrecision">
        <circle cx="570.500" cy="181" r="12.500"/><circle cx="972.500" cy="181" r="12.500"/><circle cx="216" cy="247" r="12.500"/><circle cx="216" cy="417" r="12.500"/><circle cx="216" cy="492.500" r="12.500"/>
      </g>
      <g shape-rendering="geometricPrecision">
        <text x="571" y="186">6</text><text x="972" y="186">7</text><text x="216" y="252">C</text><text x="216" y="422">B</text><text x="216" y="497">A</text>
      </g>
      <path d="M257 628V603" stroke="#00d800" stroke-width="2" fill="none"/>
      <path d="M258 628V597" stroke="#1e78f0" stroke-width="4" fill="none"/>
      <polygon points="260,584 265,596 262,596 262,600 256,600 256,596 255,596" fill="#1e78f0"/>
      <path d="M258 627.500H296" stroke="#f00" stroke-width="4" fill="none"/>
      <polygon points="296,623 307,628 296,632" fill="#f00"/>
      <path d="M247 579h9l-9 9h10" fill="none" stroke="#1e78f0"/>
      <path d="M266 601l5 5 5-5M271 606v5" fill="none" stroke="#10c010"/>
      <path d="M295 616l8 8M303 616l-8 8" fill="none" stroke="#b00000"/>
    </svg>

    <div class="lb d-flex">
      <div class="seg">
        <i class="grip"></i>
        <div class="t"><svg class="ic"><use href="#orth"/></svg>正交</div>
        <div class="t on"><svg class="ic"><use href="#snap"/></svg>对象捕捉</div>
        <div class="t"><svg class="ic"><use href="#dyn"/></svg>动态输入</div>
      </div>
      <div class="seg gap3">
        <i class="grip"></i>
        <div class="t"><svg class="ic"><use href="#x"/></svg>交点</div>
        <div class="t on pz"><svg class="ic"><use href="#perp"/></svg>垂点</div>
        <div class="t on pz"><svg class="ic"><use href="#midp"/></svg>中点</div>
        <div class="t"><svg class="ic"><use href="#vert"/></svg>顶点</div>
        <div class="t"><svg class="ic"><use href="#crd"/></svg>坐标</div>
      </div>
    </div>
  </div>
</div>

<!-- barra de estado -->
<div class="stat d-flex">
  <div class="cell cm s148">X=56417 Y=8453</div>
  <div class="cell cm s78"><u>层高</u>:3.55m</div>
  <div class="cell cm s97"><u>底标高</u>:-3.58m</div>
  <div class="cell cm s48">0</div>
  <div class="cell s914">按鼠标左键指定第一个角点，或拾取构件图元</div>
  <div class="cell cm s70 ms-auto">652.4 FPS</div>
</div>

<!-- barra de tareas -->
<div class="task d-flex">
  <div class="tst d-flex align-items-center justify-content-center"><svg width="17" height="17" viewBox="0 0 16 16"><use href="#win"/></svg></div>
  <div class="tse d-flex align-items-center">
    <svg class="ring" width="16" height="16"><circle cx="8" cy="8" r="6.500" fill="none" stroke="#ddd" stroke-width="2"/></svg>
    在这里输入你要搜索的内容
    <svg class="ms-auto" width="16" height="24"><use href="#mic"/></svg>
  </div>
  <div class="tk tm4 d-flex align-items-center justify-content-center"><svg class="big"><use href="#pin"/></svg></div>
  <div class="tk d-flex align-items-center justify-content-center"><svg class="big"><use href="#spi"/></svg></div>
  <div class="tk tm5 d-flex align-items-center justify-content-center"><svg class="big"><use href="#edg"/></svg></div>
  <div class="tk d-flex align-items-center justify-content-center"><svg class="big"><use href="#sto"/></svg></div>
  <div class="tk d-flex align-items-center justify-content-center"><svg class="big"><use href="#fld"/></svg></div>
  <div class="tk und d-flex align-items-center justify-content-center"><svg class="big"><use href="#gg"/></svg></div>
  <div class="tk und d-flex align-items-center justify-content-center"><svg class="big"><use href="#gre"/></svg></div>
  <div class="tk act d-flex align-items-center justify-content-center"><svg class="big"><use href="#gld"/></svg></div>
  <div class="tk und d-flex align-items-center justify-content-center"><svg class="big"><use href="#not"/></svg></div>
  <div class="tray d-flex">
    <div class="tc t60"><span>30%</span><span>CPU使用</span></div>
    <div class="tc t8"></div>
    <div class="tc t22"><svg width="12" height="7"><path d="M0 6l6-5 6 5" fill="none" stroke="#fff"/></svg></div>
    <div class="tc t24"><svg width="20" height="16"><use href="#bat"/></svg></div>
    <div class="tc t26"><svg width="16" height="16"><use href="#wif"/></svg></div>
    <div class="tc t23"><svg width="16" height="16"><use href="#vol"/></svg></div>
    <div class="tc t25">中</div>
    <div class="tc t32"><div class="sgs">S</div></div>
    <div class="tc t76"><span>19:30</span><span>2017/7/21</span></div>
    <div class="tc t52"><svg width="16" height="16"><use href="#ntf"/></svg><span class="nbad">2</span></div>
  </div>
</div>

<!-- flotantes -->
<div class="flt">
  <div class="fhd d-flex align-items-center justify-content-between">
    <span>偏移工具栏</span>
    <svg width="9" height="9"><path d="M0 0l9 9M9 0L0 9" stroke="#fff" stroke-width="1.400"/></svg>
  </div>
  <div class="fbd d-flex align-items-center">
    <div class="cmb"><b>不偏移</b><i><u class="car"></u></i></div>
    <i class="sep"></i><span class="fm">X=</span>
    <div class="spn"><span>0</span><span class="spk"><i class="au"></i><i class="ad"></i></span></div>
    <span class="fm">mm</span><span class="fm">Y=</span>
    <div class="spn"><span>0</span><span class="spk"><i class="au"></i><i class="ad"></i></span></div>
    <span class="fm">mm</span><i class="sep"></i>
    <input class="form-check-input" type="checkbox" aria-label="旋转">
    <span class="text-dark me-1">旋转</span>
    <div class="spn spr"><span>0.000</span><span class="spk"><i class="au"></i><i class="ad"></i></span></div>
    <span class="fm">°</span>
  </div>
</div>

<div class="sgl">S</div>
<div class="sog d-flex align-items-center">
  <span class="me-2">英</span><span class="me-1">’,</span>
  <svg width="16" height="16"><use href="#mc2"/></svg>
  <svg width="18" height="16"><use href="#kb"/></svg>
  <svg width="16" height="16"><use href="#psn"/></svg>
  <svg width="16" height="16"><use href="#shr"/></svg>
  <svg width="16" height="16"><use href="#wre"/></svg>
</div>

<script>
  // nivel, texto, icono
  const filas = [
    [0, '墙', 'open'], [1, '剪力墙(Q)', 't-wall'], [1, '人防门框墙(RF)', 't-door'], [1, '砌体墙(Q)', 't-brick'], [1, '暗梁(A)', 't-hb'], [1, '砌体加筋(Y)', 't-reb', 'lst'],
    [0, '门窗洞', 'closed'],
    [0, '梁', 'open'], [1, '梁(L)', 't-beam'], [1, '圈梁(E)', 't-ring', 'lst'],
    [0, '板', 'closed'],
    [0, '基础', 'open'], [1, '基础梁(F)', 't-fb'], [1, '筏板基础(M)', 't-raft'], [1, '集水坑(K)', 't-pit'], [1, '柱墩(Y)', 't-ped'], [1, '筏板主筋(R)', 't-main'], [1, '筏板负筋(X)', 't-neg'], [1, '独立基础(P)', 't-ind'], [1, '条形基础(T)', 't-str'], [1, '桩承台(V)', 't-cap'], [1, '承台梁(F)', 't-fb'], [1, '桩(U)', 't-pil'], [1, '基础板带(W)', 't-bnd', 'lst'],
    [0, '其它', 'closed'],
    [0, '自定义', 'open'], [1, '自定义点', 'x'], [1, '自定义线(X)', 't-lin', 'sel'], [1, '自定义面', 't-fac'], [1, '尺寸标注(W)', 't-dim', 'lst'],
    [0, '运影(U)', 'closed', 'end']
  ];

  const conLetras = t => t.replace(/\(.+\)/, '<span class="mn">$&</span>');
  const bajar = '<svg width="10" height="6"><path d="M1 1l4 4 4-4" fill="none" stroke="#555" stroke-width="1.800"/></svg>';
  const abrir = '<svg width="10" height="10"><path d="M3 1l4 4-4 4" fill="none" stroke="#bbb" stroke-width="1.800"/></svg>';

  const tree = document.getElementById('tree');
  filas.forEach(([nivel, texto, icono, marca]) => {
    const div = document.createElement('div');
    if (nivel === 0) {
      const abierto = icono === 'open';
      div.className = 'tr tr0 ' + (marca || '');
      div.innerHTML = `<span class="exp">${abierto ? bajar : abrir}</span>
        <span class="fold"><svg width="16" height="14"><use href="#${abierto ? 'fo' : 'fc'}"/></svg></span>${conLetras(texto)}`;
    } else if (marca === 'sel') {
      div.className = 'tr tr1';
      div.innerHTML = `<span class="tsel"><svg class="ic"><use href="#${icono}"/></svg>${conLetras(texto)}</span>
        <svg class="ic ms-0 me-0"><use href="#grid"/></svg><span class="neww">NEW</span>`;
    } else {
      div.className = 'tr tr1 ' + (marca || '');
      div.innerHTML = `<svg class="ic"><use href="#${icono}"/></svg>${conLetras(texto)}`;
    }
    tree.appendChild(div);
  });
</script>
</body>
</html>
